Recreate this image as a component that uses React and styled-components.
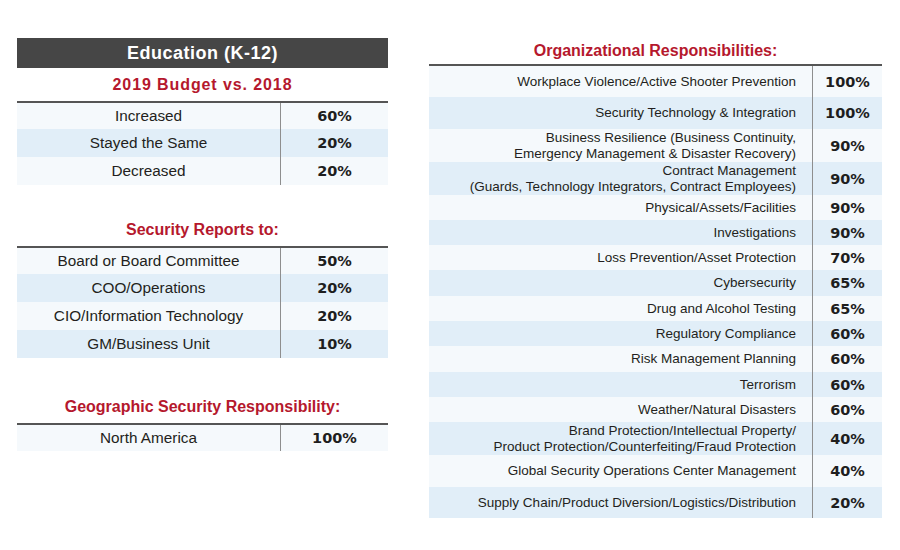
import React from 'react';
import styled, { createGlobalStyle } from 'styled-components';

const GlobalStyle = createGlobalStyle`
  html, body {
    margin: 0;
    padding: 0;
    background: #ffffff;
  }
  body {
    font-family: 'Liberation Sans', Arial, sans-serif;
    color: #231f20;
  }
`;

const S = {
  Page: styled.div`
    display: flex;
    align-items: flex-start;
    gap: 41px;
    width: 900px;
    height: 550px;
    box-sizing: border-box;
    padding: 38px 0 0 17px;
    overflow: hidden;
  `,
  Column: styled.div`
    display: flex;
    flex-direction: column;
    width: ${(p) => p.$width}px;
  `,
  Banner: styled.div`
    display: flex;
    align-items: center;
    justify-content: center;
    height: 30px;
    background: #464646;
    color: #ffffff;
    font-weight: 700;
    font-size: 18px;
    letter-spacing: 0.5px;
  `,
  SectionTitle: styled.div`
    display: flex;
    align-items: center;
    justify-content: center;
    height: ${(p) => p.$h || 33}px;
    margin-top: ${(p) => p.$gap || 0}px;
    color: #b5182d;
    font-weight: 700;
    font-size: 16px;
    letter-spacing: ${(p) => p.$spacing || 0}px;
  `,
  Table: styled.div`
    display: flex;
    flex-direction: column;
    border-top: 2px solid #555555;
  `,
  Row: styled.div`
    display: grid;
    grid-template-columns: ${(p) => p.$cols};
    height: ${(p) => p.$h}px;
    background: ${(p) => (p.$shade ? '#e1eef8' : '#f5f9fc')};
  `,
  Label: styled.div`
    display: flex;
    align-items: center;
    justify-content: ${(p) => (p.$right ? 'flex-end' : 'center')};
    padding-right: ${(p) => (p.$right ? 16 : 0)}px;
    text-align: ${(p) => (p.$right ? 'right' : 'center')};
    font-size: ${(p) => (p.$right ? 13.5 : 15.3)}px;
    line-height: 16px;
    color: #231f20;
  `,
  Value: styled.div`
    display: flex;
    align-items: center;
    justify-content: center;
    border-left: 1px solid #8e8e8e;
    font-family: 'DejaVu Sans', Verdana, sans-serif;
    font-weight: 700;
    font-size: 14.5px;
    color: #1e1e1e;
  `,
};

const budget = [
  ['Increased', '60%'],
  ['Stayed the Same', '20%'],
  ['Decreased', '20%'],
];

const reportsTo = [
  ['Board or Board Committee', '50%'],
  ['COO/Operations', '20%'],
  ['CIO/Information Technology', '20%'],
  ['GM/Business Unit', '10%'],
];

const geographic = [['North America', '100%']];

const responsibilities = [
  ['Workplace Violence/Active Shooter Prevention', '100%', 31],
  ['Security Technology & Integration', '100%', 32],
  ['Business Resilience (Business Continuity,\nEmergency Management & Disaster Recovery)', '90%', 33],
  ['Contract Management\n(Guards, Technology Integrators, Contract Employees)', '90%', 33],
  ['Physical/Assets/Facilities', '90%', 25],
  ['Investigations', '90%', 25],
  ['Loss Prevention/Asset Protection', '70%', 25],
  ['Cybersecurity', '65%', 26],
  ['Drug and Alcohol Testing', '65%', 25],
  ['Regulatory Compliance', '60%', 25],
  ['Risk Management Planning', '60%', 26],
  ['Terrorism', '60%', 25],
  ['Weather/Natural Disasters', '60%', 25],
  ['Brand Protection/Intellectual Property/\nProduct Protection/Counterfeiting/Fraud Protection', '40%', 33],
  ['Global Security Operations Center Management', '40%', 32],
  ['Supply Chain/Product Diversion/Logistics/Distribution', '20%', 31],
];

const LEFT_COLS = '263px 108px';
const RIGHT_COLS = '383px 70px';

// Split on newline so two-line labels break where the source does
const renderLines = (text) =>
  text.split('\n').map((line, i) => (
    <React.Fragment key={i}>
      {i > 0 && <br />}
      {line}
    </React.Fragment>
  ));

const LeftTable = ({ rows }) => (
  <S.Table>
    {rows.map(([label, value], i) => (
      <S.Row key={label} $cols={LEFT_COLS} $h={i === 0 ? 26 : 28} $shade={i % 2 === 1}>
        <S.Label>{label}</S.Label>
        <S.Value>{value}</S.Value>
      </S.Row>
    ))}
  </S.Table>
);

const App = () => {
  return (
    <>
      <GlobalStyle />
      <S.Page>
        <S.Column $width={371}>
          <S.Banner>Education (K-12)</S.Banner>
          <S.SectionTitle $spacing={0.9}>2019 Budget vs. 2018</S.SectionTitle>
          <LeftTable rows={budget} />
          <S.SectionTitle $gap={28}>Security Reports to:</S.SectionTitle>
          <LeftTable rows={reportsTo} />
          <S.SectionTitle $gap={32}>Geographic Security Responsibility:</S.SectionTitle>
          <LeftTable rows={geographic} />
        </S.Column>
        <S.Column $width={453}>
          <S.SectionTitle $h={26}>Organizational Responsibilities:</S.SectionTitle>
          <S.Table>
            {responsibilities.map(([label, value, h], i) => (
              <S.Row key={label} $cols={RIGHT_COLS} $h={h} $shade={i % 2 === 1}>
                <S.Label $right>{renderLines(label)}</S.Label>
                <S.Value>{value}</S.Value>
              </S.Row>
            ))}
          </S.Table>
        </S.Column>
      </S.Page>
    </>
  );
};

export default App;
